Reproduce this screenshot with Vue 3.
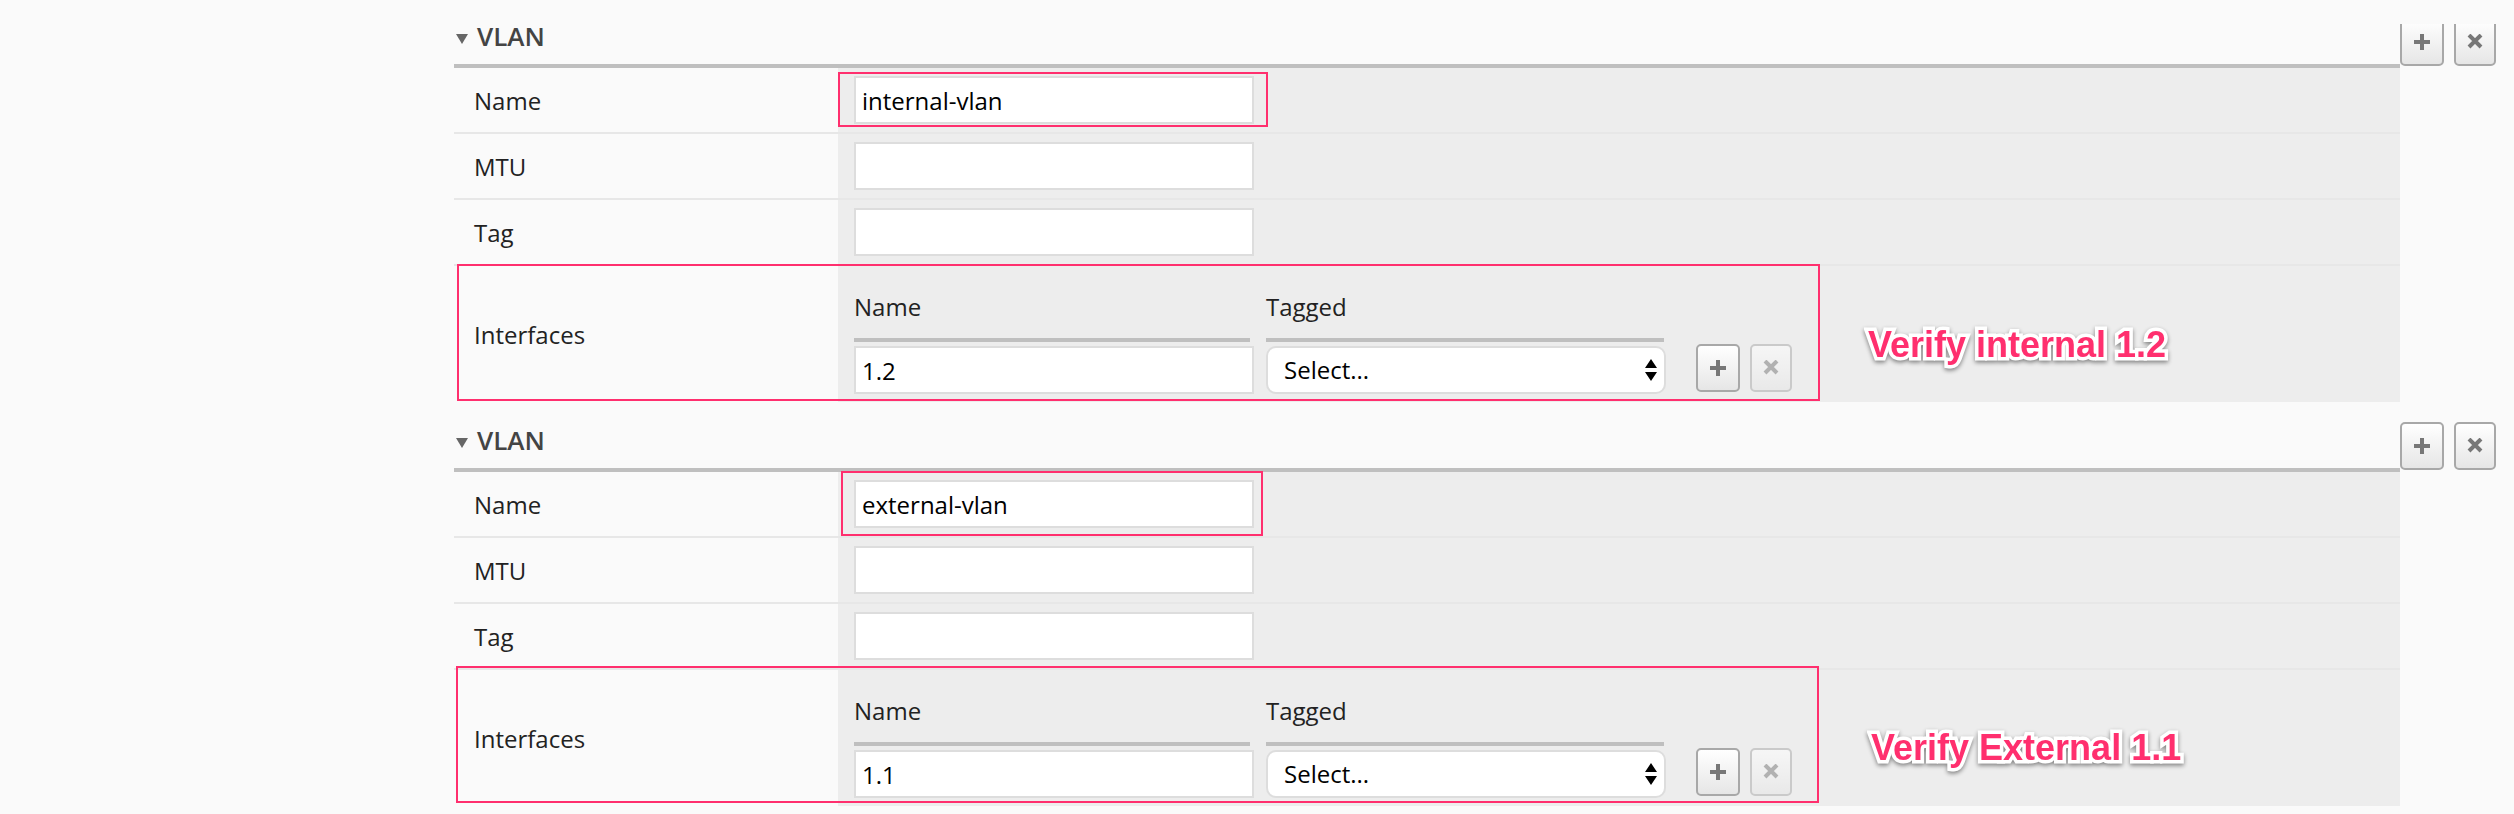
<script setup>
import { reactive } from 'vue'

const vlans = reactive([
  { key: 'internal', open: true, name: 'internal-vlan', mtu: '', tag: '', iface: '1.2', tagged: '', note: 'Verify internal 1.2' },
  { key: 'external', open: true, name: 'external-vlan', mtu: '', tag: '', iface: '1.1', tagged: '', note: 'Verify External 1.1' },
])
</script>

<template>
  <main class="page">
    <section v-for="vlan in vlans" :key="vlan.key" class="vlan" :class="vlan.key">
      <div class="body">
        <h2 class="heading">
          <button type="button" class="toggle" :aria-expanded="vlan.open" @click="vlan.open = !vlan.open">
            <svg class="caret" viewBox="0 0 12 10" aria-hidden="true"><path d="M0 0h12L6 10z" /></svg>
            VLAN
          </button>
        </h2>
        <div v-show="vlan.open">
          <div class="row">
            <label class="label" :for="vlan.key + '-name'">Name</label>
            <div class="value"><input :id="vlan.key + '-name'" v-model="vlan.name" class="field" type="text" /></div>
          </div>
          <div class="row">
            <label class="label" :for="vlan.key + '-mtu'">MTU</label>
            <div class="value"><input :id="vlan.key + '-mtu'" v-model="vlan.mtu" class="field" type="text" /></div>
          </div>
          <div class="row">
            <label class="label" :for="vlan.key + '-tag'">Tag</label>
            <div class="value"><input :id="vlan.key + '-tag'" v-model="vlan.tag" class="field" type="text" /></div>
          </div>
          <div class="row last">
            <span class="label">Interfaces</span>
            <div class="value nested">
              <table class="interfaces">
                <thead>
                  <tr>
                    <th scope="col"><span :id="vlan.key + '-if-name'" class="column">Name</span></th>
                    <th scope="col"><span :id="vlan.key + '-if-tagged'" class="column">Tagged</span></th>
                    <td></td>
                  </tr>
                </thead>
                <tbody>
                  <tr>
                    <td class="cell"><input v-model="vlan.iface" class="field" type="text" :aria-labelledby="vlan.key + '-if-name'" /></td>
                    <td class="cell">
                      <div class="picker">
                        <select v-model="vlan.tagged" class="field select" :aria-labelledby="vlan.key + '-if-tagged'">
                          <option value="">Select...</option>
                        </select>
                        <svg class="arrows" viewBox="0 0 12 22" aria-hidden="true"><path d="M6 0l6 9H0zM0 13h12l-6 9z" /></svg>
                      </div>
                    </td>
                    <td class="tools">
                      <div class="actions">
                        <button type="button" class="btn add" aria-label="Add interface">
                          <svg viewBox="0 0 16 16" aria-hidden="true"><path d="M8 0v16M0 8h16" /></svg>
                        </button>
                        <button type="button" class="btn remove" aria-label="Remove interface" disabled>
                          <svg viewBox="0 0 16 16" aria-hidden="true"><path d="M2 1l12 12M14 1L2 13" /></svg>
                        </button>
                      </div>
                    </td>
                  </tr>
                </tbody>
              </table>
            </div>
          </div>
        </div>
      </div>
      <div class="actions outer">
        <button type="button" class="btn add" aria-label="Add VLAN">
          <svg viewBox="0 0 16 16" aria-hidden="true"><path d="M8 0v16M0 8h16" /></svg>
        </button>
        <button type="button" class="btn remove" aria-label="Remove VLAN">
          <svg viewBox="0 0 16 16" aria-hidden="true"><path d="M2 1l12 12M14 1L2 13" /></svg>
        </button>
      </div>
      <div class="mark mark-name"></div>
      <div class="mark mark-interfaces"></div>
      <p class="note">{{ vlan.note }}</p>
    </section>
  </main>
</template>

<style>
body {
  background: #fafafa;
}
</style>

<style scoped>
.page {
  display: flex;
  flex-direction: column;
  gap: 2px;
  padding: 0 18px 8px 454px;
  background: #fafafa;
  color: #222;
  font: 24px/32px "Open Sans", "Noto Sans", sans-serif;
}
.vlan {
  position: relative;
  display: grid;
  grid-template-columns: 1fr auto;
  align-items: start;
}
.heading {
  margin: 0;
  padding: 18px 0 10px;
  border-bottom: 4px solid #bfbfbf;
  font-size: 26px;
  line-height: 36px;
}
.toggle {
  display: flex;
  align-items: center;
  gap: 9px;
  margin: 0;
  padding: 0 2px;
  border: 0;
  background: none;
  color: #444;
  font: inherit;
  font-weight: 600;
}
.caret {
  width: 12px;
  height: 10px;
  margin-top: 6px;
  fill: #666;
}
.row {
  display: grid;
  grid-template-columns: 384px 1fr;
  border-bottom: 2px solid #e7e7e7;
}
.row.last {
  border-bottom: 0;
}
.label {
  display: flex;
  align-items: center;
  padding: 2px 20px 0;
}
.value {
  display: flex;
  padding: 8px 16px;
  background: #ededed;
}
.nested {
  padding-top: 0;
}
.field {
  box-sizing: border-box;
  width: 400px;
  height: 48px;
  margin: 0;
  padding: 0 6px;
  border: 2px solid #ddd;
  border-radius: 0;
  outline: 0;
  background: #fff;
  color: #000;
  font: inherit;
}
.select {
  display: block;
  appearance: none;
  padding: 0 32px 0 16px;
  border-radius: 10px;
}
.picker {
  position: relative;
  width: 400px;
}
.arrows {
  position: absolute;
  top: 13px;
  right: 9px;
  width: 12px;
  height: 22px;
  pointer-events: none;
}
.interfaces {
  border-collapse: collapse;
}
.interfaces th,
.interfaces td {
  padding: 0 12px 0 0;
  vertical-align: top;
  text-align: left;
  font-weight: 400;
}
.interfaces th {
  padding-right: 14px;
}
.interfaces th:first-child {
  padding-right: 16px;
}
.interfaces .column {
  display: block;
  padding: 25px 0 15px;
  border-bottom: 4px solid #bfbfbf;
}
.interfaces .cell {
  padding-top: 4px;
}
.cell .field {
  display: block;
}
.interfaces .tools {
  padding: 2px 0 0 18px;
}
.actions {
  display: flex;
  gap: 10px;
}
.outer {
  padding-top: 18px;
}
.internal .outer {
  clip-path: inset(24px 0 0);
}
.btn {
  display: flex;
  align-items: center;
  justify-content: center;
  box-sizing: border-box;
  width: 44px;
  height: 48px;
  margin: 0;
  padding: 0;
  border: 2px solid #a8a8a8;
  border-radius: 5px;
  background: linear-gradient(#fff, #e6e6e6);
}
.remove {
  width: 42px;
}
.btn svg {
  width: 16px;
  height: 16px;
  fill: none;
  stroke: #777;
  stroke-width: 4;
}
.btn:disabled {
  opacity: 0.5;
}
.mark {
  position: absolute;
  box-sizing: border-box;
  border: 2px solid #ff2f6e;
  pointer-events: none;
}
.mark-name {
  top: 72px;
  left: 384px;
  width: 430px;
  height: 55px;
}
.mark-interfaces {
  top: 264px;
  left: 3px;
  width: 1363px;
  height: 137px;
}
.external .mark-name {
  top: 67px;
  left: 387px;
  width: 422px;
  height: 65px;
}
.external .mark-interfaces {
  top: 262px;
  left: 2px;
}
.note {
  position: absolute;
  top: 325px;
  left: 1414px;
  margin: 0;
  color: #ff2f6e;
  font: 700 36px/40px "Liberation Sans", Arial, sans-serif;
  white-space: nowrap;
  -webkit-text-stroke: 7px #fff;
  stroke-linejoin: round;
  paint-order: stroke fill;
  filter: drop-shadow(0 2px 2px rgba(0, 0, 0, 0.45));
}
.external .note {
  top: 324px;
  left: 1417px;
}
</style>
